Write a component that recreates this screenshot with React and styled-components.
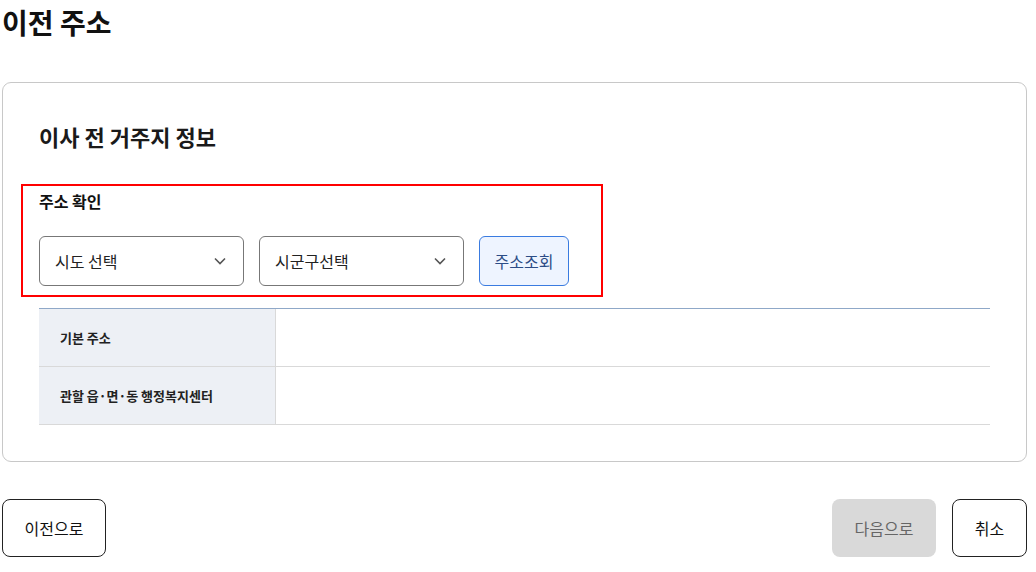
import styled, { createGlobalStyle } from "styled-components";

const GlobalStyle = createGlobalStyle`
  body {
    margin: 0;
    background: #fff;
    font-family: "Noto Sans CJK KR", "Noto Sans", sans-serif;
    color: #111;
  }
`;

const Page = styled.div`
  width: 1025px;
  padding-left: 2px;
`;

const Title = styled.h1`
  margin: 0;
  font-size: 28px;
  font-weight: 700;
  line-height: 44px;
  color: #111;
`;

const Card = styled.section`
  margin-top: 38px;
  border: 1px solid #c8c8c8;
  border-radius: 9px;
  padding: 37px 36px 36px 36px;
`;

const CardTitle = styled.h2`
  margin: 0;
  font-size: 22px;
  font-weight: 700;
  line-height: 32px;
  color: #1a1a1a;
`;

const CheckBox = styled.div`
  margin: 32px 0 0 -18px;
  width: 546px;
  border: 2px solid #ff0000;
  padding: 3px 16px 9px 16px;
`;

const Label = styled.div`
  font-size: 16px;
  font-weight: 700;
  line-height: 24px;
  color: #111;
`;

const Row = styled.div`
  display: flex;
  gap: 15px;
  margin-top: 23px;
`;

const Select = styled.div`
  box-sizing: border-box;
  width: 205px;
  height: 50px;
  border: 1px solid #777;
  border-radius: 6px;
  display: flex;
  align-items: center;
  justify-content: space-between;
  padding: 0 17px 0 15px;
  font-size: 16px;
  color: #222;
`;

const SearchButton = styled.button`
  box-sizing: border-box;
  width: 90px;
  height: 50px;
  border: 1px solid #3a7be0;
  border-radius: 6px;
  background: #eef4ff;
  color: #2c4c86;
  font-family: inherit;
  font-size: 16px;
`;

const Table = styled.div`
  margin-top: 11px;
  border-top: 1px solid #8fa8c8;
`;

const TableRow = styled.div`
  box-sizing: border-box;
  display: grid;
  grid-template-columns: 237px 1fr;
  height: 58px;
  border-bottom: 1px solid #d9d9d9;
`;

const HeadCell = styled.div`
  background: #edf0f5;
  border-right: 1px solid #d9d9d9;
  display: flex;
  align-items: center;
  padding-left: 21px;
  font-size: 13px;
  font-weight: 700;
  color: #222;
`;

const Cell = styled.div``;

const Footer = styled.div`
  display: flex;
  align-items: center;
  margin-top: 37px;
  gap: 16px;
`;

const Spacer = styled.div`
  flex: 1;
`;

const FooterButton = styled.button`
  box-sizing: border-box;
  width: ${(p) => p.$width}px;
  height: 58px;
  border-radius: 8px;
  border: ${(p) => (p.$disabled ? "none" : "1px solid #222")};
  background: ${(p) => (p.$disabled ? "#d9d9d9" : "#fff")};
  color: ${(p) => (p.$disabled ? "#666" : "#111")};
  font-family: inherit;
  font-size: 16px;
`;

const Chevron = () => (
  <svg width="12" height="8" viewBox="0 0 12 8" fill="none">
    <path d="M1 1.5L6 6.5L11 1.5" stroke="#555" strokeWidth="1.6" />
  </svg>
);

export default function App() {
  return (
    <Page>
      <GlobalStyle />
      <Title>이전 주소</Title>
      <Card>
        <CardTitle>이사 전 거주지 정보</CardTitle>
        <CheckBox>
          <Label>주소 확인</Label>
          <Row>
            <Select>
              <span>시도 선택</span>
              <Chevron />
            </Select>
            <Select>
              <span>시군구선택</span>
              <Chevron />
            </Select>
            <SearchButton>주소조회</SearchButton>
          </Row>
        </CheckBox>
        <Table>
          <TableRow>
            <HeadCell>기본 주소</HeadCell>
            <Cell />
          </TableRow>
          <TableRow>
            <HeadCell>관할 읍·면·동 행정복지센터</HeadCell>
            <Cell />
          </TableRow>
        </Table>
      </Card>
      <Footer>
        <FooterButton $width={104}>이전으로</FooterButton>
        <Spacer />
        <FooterButton $width={104} $disabled>
          다음으로
        </FooterButton>
        <FooterButton $width={75}>취소</FooterButton>
      </Footer>
    </Page>
  );
}
